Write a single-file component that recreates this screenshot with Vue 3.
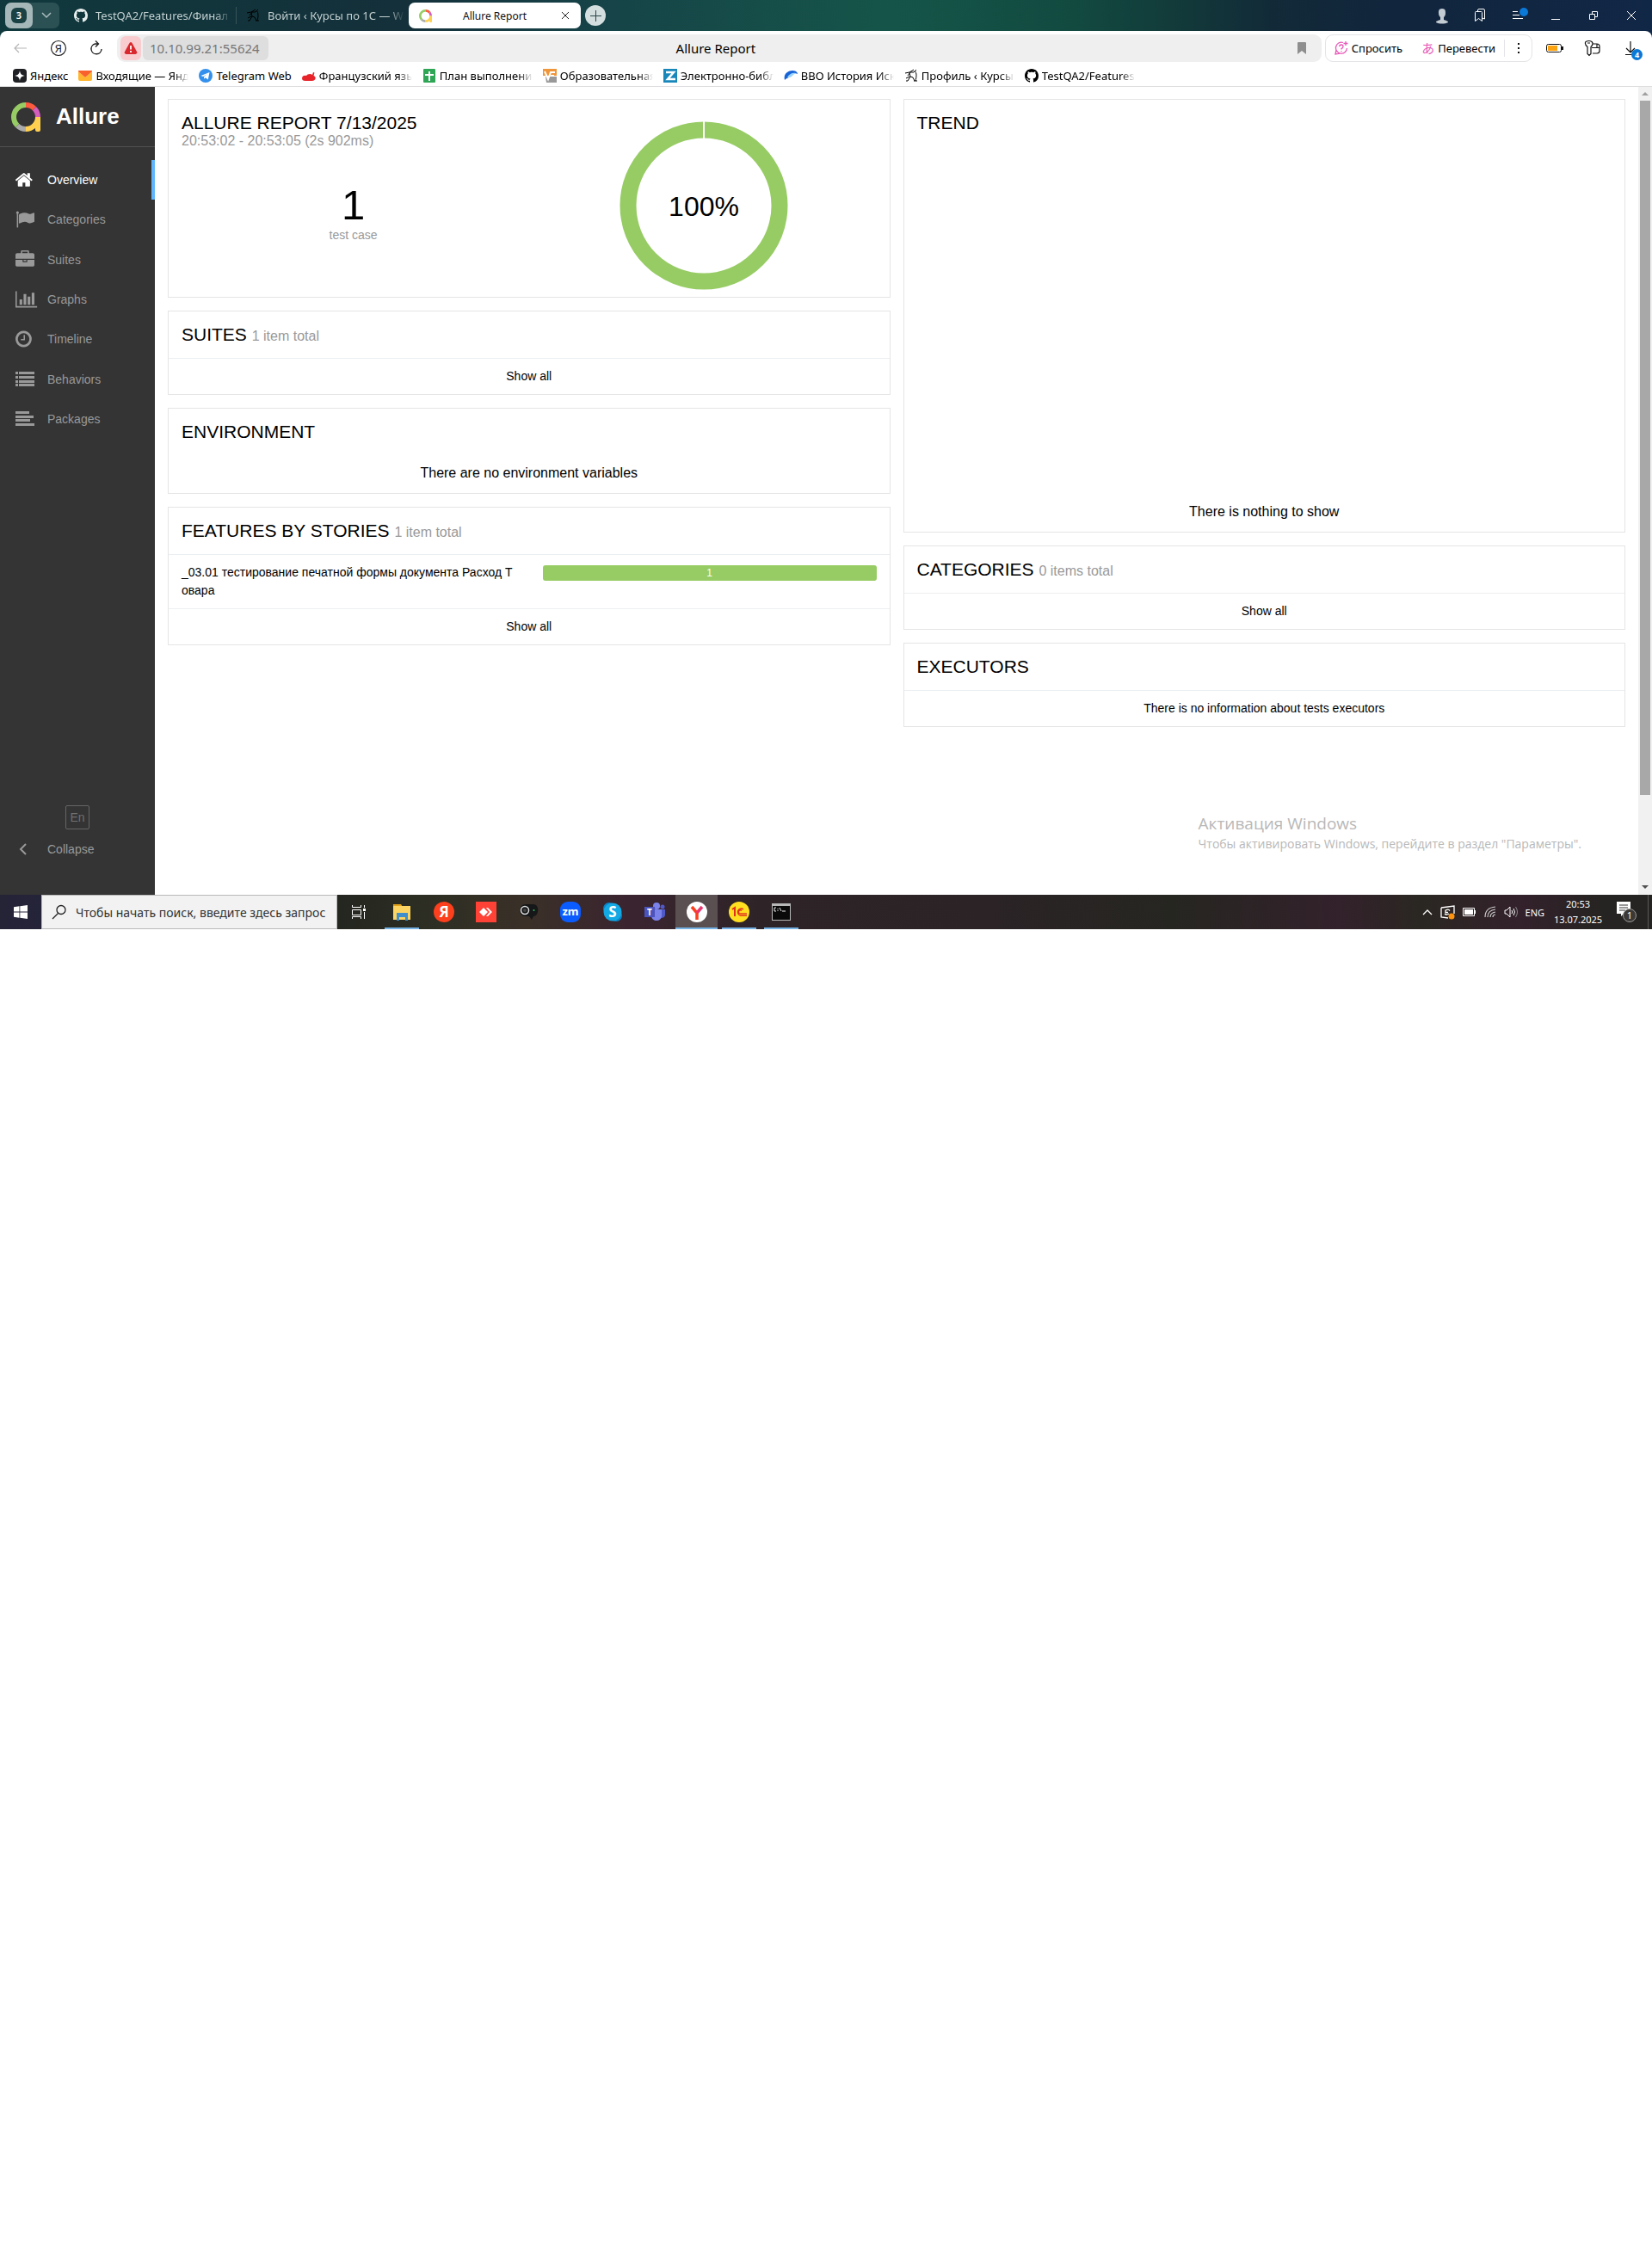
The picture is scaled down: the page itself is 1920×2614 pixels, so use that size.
<script setup>
const github =
  '<path fill="currentColor" d="M8 0C3.58 0 0 3.58 0 8c0 3.54 2.29 6.53 5.47 7.59.4.07.55-.17.55-.38 0-.19-.01-.82-.01-1.49-2.01.37-2.53-.49-2.69-.94-.09-.23-.48-.94-.82-1.13-.28-.15-.68-.52-.01-.53.63-.01 1.08.58 1.23.82.72 1.21 1.87.87 2.33.66.07-.52.28-.87.51-1.07-1.78-.2-3.64-.89-3.64-3.95 0-.87.31-1.59.82-2.15-.08-.2-.36-1.02.08-2.12 0 0 .67-.21 2.2.82.64-.18 1.32-.27 2-.27.68 0 1.36.09 2 .27 1.53-1.04 2.2-.82 2.2-.82.44 1.1.16 1.92.08 2.12.51.56.82 1.27.82 2.15 0 3.07-1.87 3.75-3.65 3.95.29.25.54.73.54 1.48 0 1.07-.01 1.93-.01 2.2 0 .21.15.46.55.38A8.013 8.013 0 0016 8c0-4.42-3.58-8-8-8z"/>'

const archer =
  '<path fill="none" stroke="currentColor" d="M1 5l5-1 5-3M4 8l3-4 4 0 3-3M6 5l1 4-3 5H2M7 9l3 1 2 4M12 2c3 3 2 8 1 12M2 11l4-2M11 14h4"/>'

// Ring segments start at three o'clock and run clockwise; pathLength is 8.
const allureRing =
  '<g fill="none" stroke-width="6">' +
  '<circle cx="17" cy="17" r="14" pathLength="8" stroke="#ffd050" stroke-dasharray="2 6"/>' +
  '<circle cx="17" cy="17" r="14" pathLength="8" stroke="#aaa" stroke-dasharray="1 7" stroke-dashoffset="-2"/>' +
  '<circle cx="17" cy="17" r="14" pathLength="8" stroke="#97cc64" stroke-dasharray="3 5" stroke-dashoffset="-3"/>' +
  '<circle cx="17" cy="17" r="14" pathLength="8" stroke="#fd5a3e" stroke-dasharray="1 7" stroke-dashoffset="-6"/>' +
  '<circle cx="17" cy="17" r="14" pathLength="8" stroke="#d35ebe" stroke-dasharray="1 7" stroke-dashoffset="-7"/>' +
  '</g><path fill="#ffd050" d="M28 17h6v15a2 2 0 0 1-2 2h-2a2 2 0 0 1-2-2z"/>'

const bookmarks = [
  { label: 'Яндекс', icon: '<rect width="16" height="16" rx="4" fill="#202124"/><path fill="#fff" d="M8 2c.6 4 2 5.400 6 6-4 .6-5.400 2-6 6-.6-4-2-5.400-6-6 4-.6 5.400-2 6-6z"/>' },
  { label: 'Входящие — Янде', icon: '<path fill="#ffb52e" d="M0 3l8 7 8-7v9q0 2-2 2H2q-2 0-2-2z"/><path fill="#f8602c" d="M0 2h16v1L8 10 0 3z"/>' },
  { label: 'Telegram Web', icon: '<circle cx="8" cy="8" r="8" fill="#3390ec"/><path fill="#fff" d="M2.500 8L12.500 4l-1.700 8.500-3-2.200-1.500 1.500-.3-2.700L10 6 5 9z"/>' },
  { label: 'Французский язы', icon: '<path fill="#e8242b" d="M0 11c0-3 3-4 5-3 1-2 5-3 7-1l1-3 1.500.5L13.500 8c4 2 2 6-2 6H4c-3 0-4-1-4-3z"/>' },
  { label: 'План выполнения', icon: '<rect x="1" width="14" height="16" rx="1" fill="#2fa556"/><path fill="#fff" d="M7 3h2v3h4v2H9v6H7V8H3V6h4z"/>' },
  { label: 'Образовательная', icon: '<path fill="#f0963a" d="M0 0h16v8H0z"/><path fill="#999" d="M3 9h13v7H4z"/><path fill="none" stroke="#fff" stroke-width="2" d="M2 3l4 9 3-8h5M9 8h4"/>' },
  { label: 'Электронно-библ', icon: '<path fill="#1a87bb" d="M0 0h16v16H0z"/><path fill="none" stroke="#fff" stroke-width="2.500" d="M3 4h9L5 12h9"/>' },
  { label: 'ВВО История Иск', icon: '<path fill="#1763d8" d="M1 13C-1 6 5 2 10 2c5 0 6 3 6 4-3-2-6 0-8 2-1 2-4 2-7 5z"/><path fill="#9ad4ff" d="M4 10c2-4 6-6 10-5-3 1-4 4-7 5z"/>' },
  { label: 'Профиль ‹ Курсы', icon: archer },
  { label: 'TestQA2/Features/', icon: github },
]

const menu = [
  { label: 'Overview', box: '97 0 2118 1792', icon: '<path d="M1472 992v480q0 26-19 45t-45 19h-384v-384h-256v384h-384q-26 0-45-19t-19-45v-480q0-1 .5-3t.5-3l575-474 575 474q1 2 1 6zm223-69l-62 74q-8 9-21 11h-3q-13 0-21-7l-692-577-692 577q-12 8-24 7-13-2-21-11l-62-74q-8-10-7-23.500t11-21.500l719-599q32-26 76-26t76 26l244 204v-195q0-14 9-23t23-9h192q14 0 23 9t9 23v408l219 182q10 8 11 21.500t-7 23.500z"/>' },
  { label: 'Categories', box: '0 0 2118 1792', icon: '<path d="M320 256q0 72-64 110v1266q0 13-9.500 22.500t-22.500 9.500h-64q-13 0-22.500-9.500t-9.500-22.500v-1266q-64-38-64-110 0-53 37.500-90.500t90.500-37.500 90.500 37.500 37.500 90.500zm1472 64v763q0 25-12.500 38.500t-39.500 27.500q-215 116-369 116-61 0-123.500-22t-108.500-48-115.500-48-142.500-22q-192 0-464 146-17 9-33 9-26 0-45-19t-19-45v-742q0-32 31-55 21-14 79-43 236-120 421-120 107 0 200 29t219 88q38 19 88 19 54 0 117.500-21t110-47 88-47 54.500-21q26 0 45 19t19 45z"/>' },
  { label: 'Suites', box: '0 0 2118 1792', icon: '<path d="M640 256h512v-128h-512v128zm1152 640v480q0 66-47 113t-113 47h-1472q-66 0-113-47t-47-113v-480h672v160q0 26 19 45t45 19h320q26 0 45-19t19-45v-160h672zm-768 0v128h-256v-128h256zm768-480v384h-1792v-384q0-66 47-113t113-47h352v-160q0-40 28-68t68-28h576q40 0 68 28t28 68v160h352q66 0 113 47t47 113z"/>' },
  { label: 'Graphs', box: '0 0 2118 1792', icon: '<path d="M640 896v512h-256v-512h256zm384-512v1024h-256v-1024h256zm1024 1152v128h-2048v-1536h128v1408h1920zm-640-896v768h-256v-768h256zm384-384v1152h-256v-1152h256z"/>' },
  { label: 'Timeline', box: '128 0 2118 1792', icon: '<path d="M1024 544v448q0 14-9 23t-23 9h-320q-14 0-23-9t-9-23v-64q0-14 9-23t23-9h224v-352q0-14 9-23t23-9h64q14 0 23 9t9 23zm416 352q0-148-73-273t-198-198-273-73-273 73-198 198-73 273 73 273 198 198 273 73 273-73 198-198 73-273zm224 0q0 209-103 385.500t-279.500 279.500-385.500 103-385.500-103-279.500-279.500-103-385.500 103-385.500 279.500-279.500 385.500-103 385.500 103 279.500 279.500 103 385.500z"/>' },
  { label: 'Behaviors', box: '0 0 26 22', icon: '<path d="M0 2h3v3H0zM4 2h18v3H4zM0 7h3v3H0zM4 7h18v3H4zM0 12h3v3H0zM4 12h18v3H4zM0 16h3v3H0zM4 16h18v3H4z"/>' },
  { label: 'Packages', box: '0 0 26 22', icon: '<path d="M0 2h16v3H0zM0 7h21v3H0zM0 11h17v3H0zM0 16h22v3H0z"/>' },
]

const apps = [
  { label: 'Проводник', run: true, icon: '<path fill="#e0a21c" d="M2 3h9l2 3H2z"/><path fill="#fcd462" d="M2 5h20v16H2z"/><path fill="#3e8fcb" d="M6 13h13v9h-3v-4H9v4H6z"/>' },
  { label: 'Яндекс', icon: '<circle cx="12" cy="12" r="12" fill="#fc3f1d"/><text x="12" y="18" font-size="17" font-weight="bold" fill="#fff" text-anchor="middle">Я</text>' },
  { label: 'AnyDesk', icon: '<path fill="#ff4136" d="M0 0h24v24H0z"/><path fill="#fff" d="M9 7l5 5-5 5-5-5zM12 7l2 0 5 5-5 5h-2l4-5z"/>' },
  { label: 'Камера', icon: '<path fill="#151718" d="M9 3h9c7 0 7 13 0 14l-2 4-3-4H9C0 17 0 3 9 3z"/><circle cx="8" cy="10" r="4.500" fill="none" stroke="#ddd" stroke-width="1.500"/><circle cx="8" cy="10" r="2" fill="#444"/><circle cx="18.500" cy="10" r="1" fill="#2fc060"/>' },
  { label: 'Zoom', icon: '<rect width="24" height="24" rx="9" fill="#0b5cff"/><text x="12" y="16" font-size="13" font-weight="bold" fill="#fff" text-anchor="middle">zm</text>' },
  { label: 'Skype', icon: '<circle cx="8" cy="8" r="7" fill="#0a84c9"/><circle cx="16" cy="16" r="7" fill="#0a84c9"/><circle cx="12" cy="12" r="10.500" fill="#13a9e4"/><text x="12" y="18" font-size="17" font-weight="bold" fill="#fff" text-anchor="middle">S</text>' },
  { label: 'Teams', icon: '<circle cx="14" cy="5" r="4" fill="#7b83eb"/><circle cx="21" cy="6" r="2.500" fill="#5059c9"/><path fill="#5059c9" d="M17 9h7v6q0 4-5 4z"/><path fill="#7b83eb" d="M8 9h12v7c0 8-12 8-12 0z"/><path fill="#4b53bc" d="M0 6h12v12H0z"/><text x="6" y="16" font-size="10" font-weight="bold" fill="#fff" text-anchor="middle">T</text>' },
  { label: 'Яндекс Браузер', active: true, icon: '<circle cx="12" cy="12" r="12" fill="#fff"/><path fill="none" stroke="#fc3f1d" stroke-width="3.500" d="M6 6l6 7v8"/><path fill="none" stroke="#e8366f" stroke-width="3.500" d="M18 6l-6 7"/>' },
  { label: '1С:Предприятие', run: true, icon: '<circle cx="12" cy="12" r="12" fill="#ffdf20"/><path fill="none" stroke="#e0301e" stroke-width="2" d="M4 9l3-2v10"/><path fill="none" stroke="#e0301e" stroke-width="1.300" d="M17 9a4 4 0 1 0-3 7h7M15 10.500a2 2 0 1 0-1 3.300h7"/>' },
  { label: 'Командная строка', run: true, icon: '<path fill="#b8b8b8" d="M1 2h22v20H1z"/><path fill="#0a0a0a" d="M2 5h20v16H2z"/><path fill="none" stroke="#eee" d="M6 7H4v4h2M8 8v1M8 10v1M10 7l2 4M13 11h4"/>' },
]

const windowButtons = [
  { label: 'Профиль', icon: '<path fill="#c3cbd3" d="M10 2c4 0 4 3 4 5 0 3-1 4-2 5v3c2 1 5 1 5 3-4 2-10 2-14 0 0-2 3-2 5-3v-3C7 11 6 10 6 7c0-2 0-5 4-5z"/>' },
  { label: 'Коллекции', icon: '<path fill="none" stroke="#fff" d="M4.500 6.500q0-1 1-1h6q1 0 1 1v10l-4-3-4 3zM7.500 5V4q0-1.500 1.500-1.500h5q1.500 0 1.500 1.500v10l-3-1"/>' },
  { label: 'Меню', icon: '<path fill="none" stroke="#fff" d="M4 5.500h6M4 9.500h8M4 13.500h12"/><circle cx="17" cy="6" r="5" fill="#0a78d6"/>' },
  { label: 'Свернуть', icon: '<path stroke="#fff" d="M5 14.500h10"/>' },
  { label: 'Развернуть', icon: '<path fill="none" stroke="#fff" d="M5.500 8.500h6v6h-6zM8.500 8V5.500h6v6H12"/>' },
  { label: 'Закрыть', icon: '<path stroke="#fff" d="M5 5l10 10M15 5L5 15"/>' },
]
</script>

<template>
  <div class="desktop">
    <header class="tabstrip">
      <div class="group">
        <button class="count" aria-label="Вкладки"><span>3</span></button>
        <button class="expand" aria-label="Список вкладок">
          <svg width="12" height="8" viewBox="0 0 12 8"><path d="M1 1l5 5 5-5" fill="none" stroke="#a9bcbd" stroke-width="1.500" /></svg>
        </button>
      </div>
      <button class="tab first">
        <svg width="16" height="16" viewBox="0 0 16 16" v-html="github" />
        <span>TestQA2/Features/Финал</span>
      </button>
      <button class="tab second">
        <svg class="dark" width="16" height="16" viewBox="0 0 16 16" v-html="archer" />
        <span>Войти ‹ Курсы по 1С — W</span>
      </button>
      <div class="tab active">
        <svg width="15" height="15" viewBox="0 0 34 34" v-html="allureRing" />
        <span>Allure Report</span>
        <button aria-label="Закрыть вкладку">
          <svg width="10" height="10" viewBox="0 0 10 10"><path d="M1 1l8 8M9 1L1 9" stroke="#222" /></svg>
        </button>
      </div>
      <button class="plus" aria-label="Новая вкладка">
        <svg width="13" height="13" viewBox="0 0 13 13"><path d="M6.500 0v13M0 6.500h13" stroke="#294448" /></svg>
      </button>
      <div class="winbuttons">
        <button v-for="b in windowButtons" :key="b.label" :aria-label="b.label">
          <svg width="24" height="20" viewBox="-2 0 24 20" v-html="b.icon" />
        </button>
      </div>
    </header>

    <div class="chrome">
      <div class="toolbar">
        <button class="tool" aria-label="Назад">
          <svg width="16" height="12" viewBox="0 0 16 12"><path d="M15 6H1M6 1L1 6l5 5" fill="none" stroke="#b5b5b5" stroke-width="1.200" /></svg>
        </button>
        <button class="tool" aria-label="Яндекс">
          <svg width="20" height="20" viewBox="0 0 20 20"><circle cx="10" cy="10" r="8.500" fill="none" stroke="#222" stroke-width="1.200" /><text x="10" y="15" font-size="13" text-anchor="middle" fill="#222">Я</text></svg>
        </button>
        <button class="tool" aria-label="Обновить">
          <svg width="18" height="18" viewBox="0 0 18 18"><path d="M11 4H7.500a6 6 0 1 0 7.500 6M8 0.500L11.500 4 8 7.500" fill="none" stroke="#222" stroke-width="1.400" /></svg>
        </button>
        <div class="address">
          <div class="site">
            <span class="warn">
              <svg width="16" height="14" viewBox="0 0 16 14"><path d="M6.500 1Q8-1 9.500 1L15 11q1 2.500-1.500 3h-11Q0 13.500 1 11z" fill="#d9292f" /><path d="M8 4v4.500M8 10v2" stroke="#fff" stroke-width="1.800" /></svg>
            </span>
            <input class="url" type="text" value="10.10.99.21:55624" aria-label="Адрес" />
          </div>
          <span class="pagetitle">Allure Report</span>
          <button class="ribbon" aria-label="В закладки">
            <svg width="10" height="14" viewBox="0 0 10 14"><path d="M0 1q0-1 1-1h8q1 0 1 1v13l-5-4-5 4z" fill="#8e8e8e" /></svg>
          </button>
        </div>
        <div class="assist">
          <button>
            <svg width="16" height="16" viewBox="0 0 16 16"><path d="M10 1.500A6.500 6.500 0 1 0 14.500 8M2 10l-1 5 5-1M5.500 6q.5-2 2.500-2t2 2-2 2.500v1M8 11v1M13 0v5M10.500 2.500h5" fill="none" stroke="#e858b8" stroke-width="1.300" /></svg>
            Спросить
          </button>
          <button class="translate"><span class="kana">あ</span>Перевести</button>
          <button class="more" aria-label="Ещё">
            <svg width="4" height="14" viewBox="0 0 4 14"><path d="M1 1h2v2H1zM1 6h2v2H1zM1 11h2v2H1z" fill="#111" /></svg>
          </button>
        </div>
        <div class="extras">
          <button aria-label="Энергосбережение">
            <svg width="22" height="20" viewBox="0 0 22 20"><rect x="1.500" y="5.500" width="17" height="9" rx="2" fill="none" stroke="#111" /><path d="M3 7h11v6H3z" fill="#fca311" /><path d="M19 8h2v4h-2z" fill="#111" /></svg>
          </button>
          <button aria-label="Пароли">
            <svg width="20" height="20" viewBox="0 0 20 20"><path d="M2 2.500q4-2 7 0c2 2 1 4-1 6v8l-2 2-2-2v-8C1 6 1 4 2 2.500zM4 4h3M10 5h5q3 0 3 3v5q0 3-3 3h-5M9 9.500h9M15 5v4" fill="none" stroke="#111" stroke-width="1.200" /></svg>
          </button>
          <button aria-label="Загрузки" class="downloads">
            <svg width="14" height="18" viewBox="0 0 14 18"><path d="M7 1v12M2 9l5 5 5-5M1 16.500h12" fill="none" stroke="#111" stroke-width="1.200" /></svg>
            <span class="badge">4</span>
          </button>
        </div>
      </div>
      <nav class="bookmarks">
        <a v-for="b in bookmarks" :key="b.label" href="#">
          <svg width="16" height="16" viewBox="0 0 16 16" v-html="b.icon" />
          <span>{{ b.label }}</span>
        </a>
      </nav>
    </div>

    <div class="page">
      <aside class="side">
        <a class="brand" href="#">
          <svg width="34" height="34" viewBox="0 0 34 34" v-html="allureRing" />
          <span>Allure</span>
        </a>
        <nav class="menu">
          <a v-for="(m, i) in menu" :key="m.label" href="#" :class="{ current: i === 0 }">
            <svg width="26" height="22" :viewBox="m.box" fill="currentColor" v-html="m.icon" />
            <span>{{ m.label }}</span>
          </a>
        </nav>
        <div class="sidefoot">
          <button class="lang">En</button>
          <button class="collapse">
            <svg width="26" height="14" viewBox="0 0 26 14"><path d="M12 1L6 7l6 6" fill="none" stroke="currentColor" stroke-width="2" /></svg>
            <span>Collapse</span>
          </button>
        </div>
      </aside>

      <main class="widgets">
        <div class="column">
          <section class="card summary">
            <div class="left">
              <h2>ALLURE REPORT 7/13/2025</h2>
              <p class="time">20:53:02 - 20:53:05 (2s 902ms)</p>
              <div class="total">
                <strong>1</strong>
                <span>test case</span>
              </div>
            </div>
            <div class="right">
              <svg width="196" height="196" viewBox="0 0 196 196">
                <circle cx="98" cy="98" r="88" fill="none" stroke="#97cc64" stroke-width="19" />
                <path d="M98 0v20" stroke="#fff" stroke-width="2" />
                <text x="98" y="110" text-anchor="middle" font-size="32">100%</text>
              </svg>
            </div>
          </section>
          <section class="card">
            <h2 class="head">SUITES <small>1 item total</small></h2>
            <a class="row" href="#">Show all</a>
          </section>
          <section class="card">
            <h2 class="head">ENVIRONMENT</h2>
            <p class="empty">There are no environment variables</p>
          </section>
          <section class="card">
            <h2 class="head">FEATURES BY STORIES <small>1 item total</small></h2>
            <a class="row story" href="#">
              <span class="name">_03.01 тестирование печатной формы документа Расход Товара</span>
              <span class="bar">1</span>
            </a>
            <a class="row" href="#">Show all</a>
          </section>
        </div>
        <div class="column">
          <section class="card">
            <h2 class="head">TREND</h2>
            <p class="empty chart">There is nothing to show</p>
          </section>
          <section class="card">
            <h2 class="head">CATEGORIES <small>0 items total</small></h2>
            <a class="row" href="#">Show all</a>
          </section>
          <section class="card">
            <h2 class="head">EXECUTORS</h2>
            <p class="row">There is no information about tests executors</p>
          </section>
        </div>
      </main>

      <div class="scroll">
        <svg width="8" height="4" viewBox="0 0 8 4"><path d="M0 4l4-4 4 4z" fill="#a0a0a0" /></svg>
        <div class="thumb"></div>
        <svg class="down" width="8" height="4" viewBox="0 0 8 4"><path d="M0 0l4 4 4-4z" fill="#505050" /></svg>
      </div>

      <div class="activation">
        <strong>Активация Windows</strong>
        <span>Чтобы активировать Windows, перейдите в раздел "Параметры".</span>
      </div>
    </div>

    <footer class="taskbar">
      <button class="start" aria-label="Пуск">
        <svg width="16" height="16" viewBox="0 0 16 16"><path fill="#fff" d="M0 2.200L6.500 1.300v6.300H0zM7.300 1.200L16 0v7.600H7.300zM0 8.400h6.500v6.300L0 13.800zM7.300 8.400H16V16l-8.700-1.200z" /></svg>
      </button>
      <label class="search">
        <svg width="18" height="18" viewBox="0 0 18 18"><circle cx="11" cy="6.500" r="5" fill="none" stroke="#222" stroke-width="1.300" /><path d="M7.500 10.500L1 17" stroke="#222" stroke-width="1.300" /></svg>
        <input type="text" placeholder="Чтобы начать поиск, введите здесь запрос" aria-label="Поиск" />
      </label>
      <button class="taskview" aria-label="Представление задач">
        <svg width="16" height="16" viewBox="0 0 16 16"><path d="M.500 0v2.500h10V0M.500 5.500h10v6H.500zM.500 16v-2.500h10V16M14.500 0v3M14.500 8v8" fill="none" stroke="#fff" /><path d="M13 4h3v3h-3z" fill="#fff" /></svg>
      </button>
      <button v-for="a in apps" :key="a.label" class="app" :class="{ run: a.run, active: a.active }" :aria-label="a.label">
        <svg width="24" height="24" viewBox="0 0 24 24" v-html="a.icon" />
      </button>
      <div class="tray">
        <svg width="12" height="8" viewBox="0 0 12 8"><path d="M1 7l5-5 5 5" fill="none" stroke="#fff" stroke-width="1.300" /></svg>
        <svg width="17" height="17" viewBox="0 0 17 17"><path d="M1 3l15-2v9M1 3v11l8 1M11 6.500Q9 4 6.500 6M5 10q2 2 5 0M6 5.500v3h3" fill="none" stroke="#fff" stroke-width="1.300" /><circle cx="13" cy="13" r="3.500" fill="#fb9210" /></svg>
        <svg width="16" height="10" viewBox="0 0 16 10"><path d="M.500.500h13v9H.500z" fill="none" stroke="#fff" /><path d="M2 2h10v6H2zM14 3h1v4h-1z" fill="#fff" /></svg>
        <svg width="14" height="14" viewBox="0 0 14 14"><path d="M1 13Q1 2 13 1M4 13q0-8 9-9M7 13q0-5 6-6M10 13q0-3 3-3" fill="none" stroke="#ccc" stroke-width="1.200" /></svg>
        <svg width="16" height="14" viewBox="0 0 16 14"><path d="M1 5h2l4-4v12L3 9H1zM9 5q1.500 2 0 4M11 3q3 4 0 8" fill="none" stroke="#fff" /><path d="M13.500 1q4 6 0 12" fill="none" stroke="#888" /></svg>
        <span>ENG</span>
        <time><span>20:53</span><span>13.07.2025</span></time>
        <button class="notes" aria-label="Уведомления">
          <svg width="26" height="26" viewBox="0 0 26 26"><path fill="#fff" d="M1 1h16v14h-8l-3 3v-3H1z" /><path d="M4 5h10M4 8h10M4 11h7" stroke="#333" /><circle cx="16" cy="17" r="7.500" fill="#3b3836" stroke="#999" /><text x="16" y="21" font-size="11" fill="#fff" text-anchor="middle">1</text></svg>
        </button>
      </div>
    </footer>
  </div>
</template>

<style>
body {
  margin: 0;
  background: #fff;
}
</style>

<style scoped>
.desktop,
.desktop * {
  box-sizing: border-box;
}
.desktop {
  font-family: "Noto Sans", "Open Sans", sans-serif;
  font-size: 13px;
  color: #000;
}
button {
  font: inherit;
  color: inherit;
  border: 0;
  padding: 0;
  background: none;
}
a {
  color: inherit;
  text-decoration: none;
}
svg {
  display: block;
  flex: none;
}
h2,
p {
  margin: 0;
  font-weight: 400;
}

/* Tab strip */
.tabstrip {
  display: flex;
  align-items: center;
  height: 44px;
  margin-bottom: -8px;
  padding: 0 2px 8px 6px;
  background: linear-gradient(90deg, #10393d 0%, #14303a 24%, #164448 37%, #155549 54%, #124a40 65%, #123b3a 71%, #122a38 77%, #11253c 84%, #112746 100%);
}
.group {
  display: flex;
  width: 63px;
  height: 30px;
  border-radius: 7px;
  background: #2c5155;
}
.count {
  width: 32px;
  border-radius: 7px;
  background: #a5b7b8;
  display: flex;
  align-items: center;
  justify-content: center;
}
.count span {
  width: 18px;
  height: 18px;
  border-radius: 6px;
  background: #1a4245;
  color: #fff;
  font-size: 11px;
  font-weight: 600;
  line-height: 18px;
}
.expand {
  flex: 1;
  display: flex;
  align-items: center;
  justify-content: center;
}
.tab {
  display: flex;
  align-items: center;
  gap: 9px;
  height: 30px;
  color: #c3d0d1;
  text-align: left;
}
.tab > span {
  flex: 1;
  overflow: hidden;
  white-space: nowrap;
}
.first {
  width: 189px;
  margin-left: 17px;
  padding-right: 6px;
}
.second {
  width: 184px;
  margin-left: 11px;
  position: relative;
}
.second::before {
  content: "";
  position: absolute;
  left: -12px;
  top: 5px;
  height: 20px;
  width: 1px;
  background: #365459;
}
.first span,
.second span {
  mask-image: linear-gradient(90deg, #000 88%, transparent);
}
.first svg {
  color: #e8eeee;
}
.dark {
  color: #000;
}
.active.tab {
  width: 200px;
  margin-left: 5px;
  padding: 0 13px 0 12px;
  border-radius: 7px;
  background: #fff;
  color: #111;
}
.active.tab span {
  text-align: center;
  font-size: 12px;
}
.active.tab button {
  margin-left: 4px;
}
.plus {
  width: 24px;
  height: 24px;
  margin-left: 5px;
  border-radius: 50%;
  background: #d4dedf;
  display: flex;
  align-items: center;
  justify-content: center;
}
.winbuttons {
  display: flex;
  margin-left: auto;
}
.winbuttons button {
  width: 44px;
  display: flex;
  justify-content: center;
}

/* Toolbar */
.chrome {
  position: relative;
  background: #fff;
  border-radius: 8px 8px 0 0;
  border-bottom: 1px solid #dedee0;
}
.toolbar {
  display: flex;
  align-items: center;
  height: 40px;
  padding: 0 8px 0 2px;
}
.tool {
  width: 44px;
  height: 32px;
  display: flex;
  align-items: center;
  justify-content: center;
}
.address {
  flex: 1;
  height: 32px;
  margin-left: 2px;
  padding: 0 12px 0 4px;
  border-radius: 9px;
  background: #efefef;
  display: grid;
  grid-template-columns: 1fr auto 1fr;
  align-items: center;
}
.site {
  display: flex;
  gap: 2px;
}
.warn {
  width: 24px;
  height: 28px;
  border-radius: 6px;
  background: #f9cdd0;
  display: flex;
  align-items: center;
  justify-content: center;
}
.url {
  width: 146px;
  height: 28px;
  border: 0;
  border-radius: 6px;
  padding: 0 8px;
  background: #dedede;
  color: #777;
  font: inherit;
  font-size: 15px;
}
.pagetitle {
  font-size: 15px;
}
.ribbon {
  justify-self: end;
  margin-right: 6px;
}
.assist {
  display: flex;
  align-items: center;
  height: 32px;
  margin-left: 4px;
  padding-left: 10px;
  border: 1px solid #e4e4e8;
  border-radius: 9px;
}
.assist button {
  display: flex;
  align-items: center;
  gap: 4px;
}
.assist .translate {
  margin-left: 22px;
}
.kana {
  color: #e858b8;
  font-family: "Noto Sans CJK JP", sans-serif;
  font-size: 15px;
  line-height: 20px;
}
.assist .more {
  width: 32px;
  height: 20px;
  margin-left: 10px;
  border-left: 1px solid #e4e4e8;
  justify-content: center;
}
.extras {
  display: flex;
  align-items: center;
  gap: 23px;
  margin-left: 15px;
}
.downloads {
  position: relative;
  margin-left: 4px;
  padding-right: 10px;
}
.badge {
  position: absolute;
  left: 8px;
  top: 10px;
  width: 13px;
  height: 13px;
  border-radius: 50%;
  background: #0a78d6;
  color: #fff;
  font-size: 9px;
  font-weight: 700;
  line-height: 13px;
}
.bookmarks {
  display: flex;
  align-items: center;
  gap: 12px;
  height: 24px;
  padding-left: 15px;
}
.bookmarks a {
  display: flex;
  align-items: center;
  gap: 4px;
  max-width: 128px;
}
.bookmarks span {
  overflow: hidden;
  white-space: nowrap;
}
.bookmarks a:nth-child(n + 4) span,
.bookmarks a:nth-child(2) span {
  flex: 0 0 108px;
  mask-image: linear-gradient(90deg, #000 85%, transparent);
}

/* Report page */
.page {
  position: relative;
  display: flex;
  min-height: 939px;
  font-family: "Liberation Sans", Arial, sans-serif;
  font-size: 14px;
}
.side {
  width: 180px;
  background: #343434;
  color: #999;
  display: flex;
  flex-direction: column;
}
.brand {
  display: flex;
  align-items: center;
  gap: 18px;
  height: 70px;
  padding-left: 13px;
  border-bottom: 1px solid #505050;
  color: #fff;
  font-size: 26px;
  font-weight: 700;
}
.menu {
  display: flex;
  flex-direction: column;
  height: 324px;
  margin-top: 15px;
}
.menu a {
  flex: 1;
  display: flex;
  align-items: center;
  gap: 11px;
  padding-left: 18px;
}
.menu .current {
  color: #fff;
  border-right: 4px solid #61b6fb;
}
.sidefoot {
  margin-top: auto;
  padding-bottom: 42px;
  display: flex;
  flex-direction: column;
}
.lang {
  align-self: center;
  width: 28px;
  height: 28px;
  border: 1px solid #666;
  border-radius: 2px;
  color: #707070;
}
.collapse {
  display: flex;
  align-items: center;
  gap: 11px;
  margin-top: 12px;
  padding-left: 18px;
  line-height: 22px;
}
.widgets {
  flex: 1;
  display: grid;
  grid-template-columns: 1fr 1fr;
  gap: 15px;
  padding: 14px 15px;
}
.column {
  display: flex;
  flex-direction: column;
  gap: 15px;
  min-width: 0;
}
.card {
  border: 1px solid #e5e5e5;
}
h2 {
  font-size: 21px;
  line-height: 24px;
}
small {
  font-size: 16px;
  line-height: 16px;
  color: #999;
}
.head {
  padding: 15px;
}
.row {
  display: block;
  border-top: 1px solid #eceff1;
  padding: 10px 15px;
  line-height: 21px;
  text-align: center;
}
.empty {
  padding: 11px 15px 13px;
  font-size: 16px;
  line-height: 20px;
  text-align: center;
}
.chart {
  padding-top: 415px;
}
.summary {
  display: flex;
  height: 231px;
}
.left {
  flex: 1;
  padding: 15px 8px 15px 15px;
}
.time {
  font-size: 16px;
  line-height: 18px;
  color: #999;
}
.total {
  display: flex;
  flex-direction: column;
  align-items: center;
  margin-top: 38px;
}
.total strong {
  font-size: 49px;
  font-weight: 400;
  line-height: 54px;
}
.total span {
  color: #999;
  line-height: 16px;
}
.right {
  flex: 1;
  display: flex;
  justify-content: center;
  padding: 25px 16px 0 0;
}
.story {
  display: flex;
  justify-content: space-between;
  text-align: left;
}
.name {
  width: 386px;
  word-break: break-all;
}
.bar {
  width: 388px;
  height: 18px;
  margin-top: 2px;
  border-radius: 3px;
  background: #97cc64;
  color: #fff;
  font-size: 12px;
  line-height: 18px;
  text-align: center;
}
.scroll {
  width: 16px;
  background: #f1f1f1;
  display: flex;
  flex-direction: column;
  align-items: center;
  padding: 6px 0 7px;
}
.thumb {
  width: 12px;
  height: 807px;
  margin-top: 6px;
  background: #a8a8a8;
}
.down {
  margin-top: auto;
}
.activation {
  position: absolute;
  right: 82px;
  bottom: 48px;
  display: flex;
  flex-direction: column;
  color: #b8b8b8;
  font-family: "Open Sans", "Noto Sans", sans-serif;
  line-height: 22px;
}
.activation strong {
  font-size: 19px;
  font-weight: 400;
  line-height: 26px;
}

/* Taskbar */
.taskbar {
  display: flex;
  height: 40px;
  background: linear-gradient(90deg, #252336 0%, #24243a 3%, #23261f 20%, #2f2f24 27%, #3a3028 32%, #3a2430 38%, #2e2427 46%, #2b2326 60%, #262621 71%, #33212b 81%, #2a2722 86%, #33212b 92%, #262422 97%, #262422 100%);
}
.start {
  width: 48px;
  display: flex;
  align-items: center;
  justify-content: center;
}
.search {
  display: flex;
  align-items: center;
  gap: 10px;
  width: 344px;
  padding-left: 11px;
  border: 1px solid #b9b9b9;
  background: #f2f2f2;
}
.search input {
  flex: 1;
  min-width: 0;
  border: 0;
  padding: 0;
  background: none;
  font: inherit;
  font-size: 14px;
}
.search input::placeholder {
  color: #333;
}
.taskview {
  width: 50px;
  display: flex;
  align-items: center;
  justify-content: center;
}
.app {
  position: relative;
  width: 49px;
  display: flex;
  align-items: center;
  justify-content: center;
}
.app.active {
  background: #5a5052;
}
.run::after,
.app.active::after {
  content: "";
  position: absolute;
  left: 5px;
  right: 4px;
  bottom: 0;
  height: 2px;
  background: #76b2e4;
}
.app.active::after {
  left: 0;
  right: 0;
}
.tray {
  display: flex;
  align-items: center;
  gap: 9px;
  margin-left: auto;
  margin-right: 4px;
  padding-right: 11px;
  border-right: 1px solid #5a5856;
  color: #fff;
  font-size: 11px;
}
time {
  display: flex;
  flex-direction: column;
  align-items: center;
  width: 60px;
  line-height: 18px;
}
.notes {
  margin-left: 5px;
}
</style>
